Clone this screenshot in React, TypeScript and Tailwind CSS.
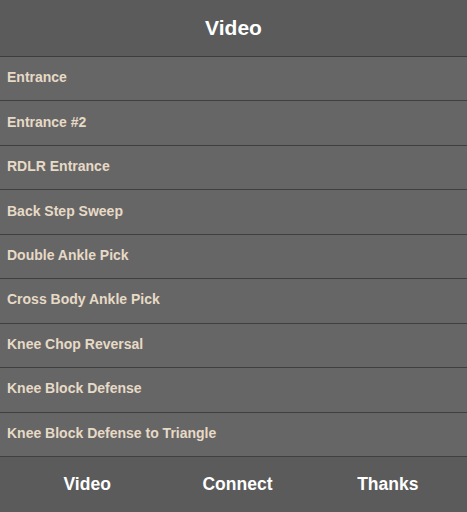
const items = [
  "Entrance",
  "Entrance #2",
  "RDLR Entrance",
  "Back Step Sweep",
  "Double Ankle Pick",
  "Cross Body Ankle Pick",
  "Knee Chop Reversal",
  "Knee Block Defense",
  "Knee Block Defense to Triangle",
];

export default function App() {
  return (
    <div
      className="w-[467px] h-[512px] flex flex-col bg-[#666666] overflow-hidden"
      style={{ fontFamily: '"Liberation Sans", Arial, sans-serif' }}
    >
      {/* Header */}
      <div className="h-[57px] shrink-0 flex items-center justify-center bg-[#5a5b5a] border-b border-[#3d3d3d]">
        <h1 className="text-[21px] font-bold text-white">Video</h1>
      </div>

      {/* List */}
      <ul className="flex flex-col">
        {items.map((item) => (
          <li
            key={item}
            className="h-[44.44px] flex items-center px-[7px] pb-[2px] border-b border-[#3f3f3f] text-[14px] font-bold text-[#e6dac6]"
          >
            {item}
          </li>
        ))}
      </ul>

      {/* Footer nav */}
      <nav className="flex-1 grid grid-cols-3 pl-[12px] pr-[4px] bg-[#5a5b5a]">
        {["Video", "Connect", "Thanks"].map((label) => (
          <div
            key={label}
            className="flex items-center justify-center text-[17.5px] font-bold text-white"
          >
            {label}
          </div>
        ))}
      </nav>
    </div>
  );
}
